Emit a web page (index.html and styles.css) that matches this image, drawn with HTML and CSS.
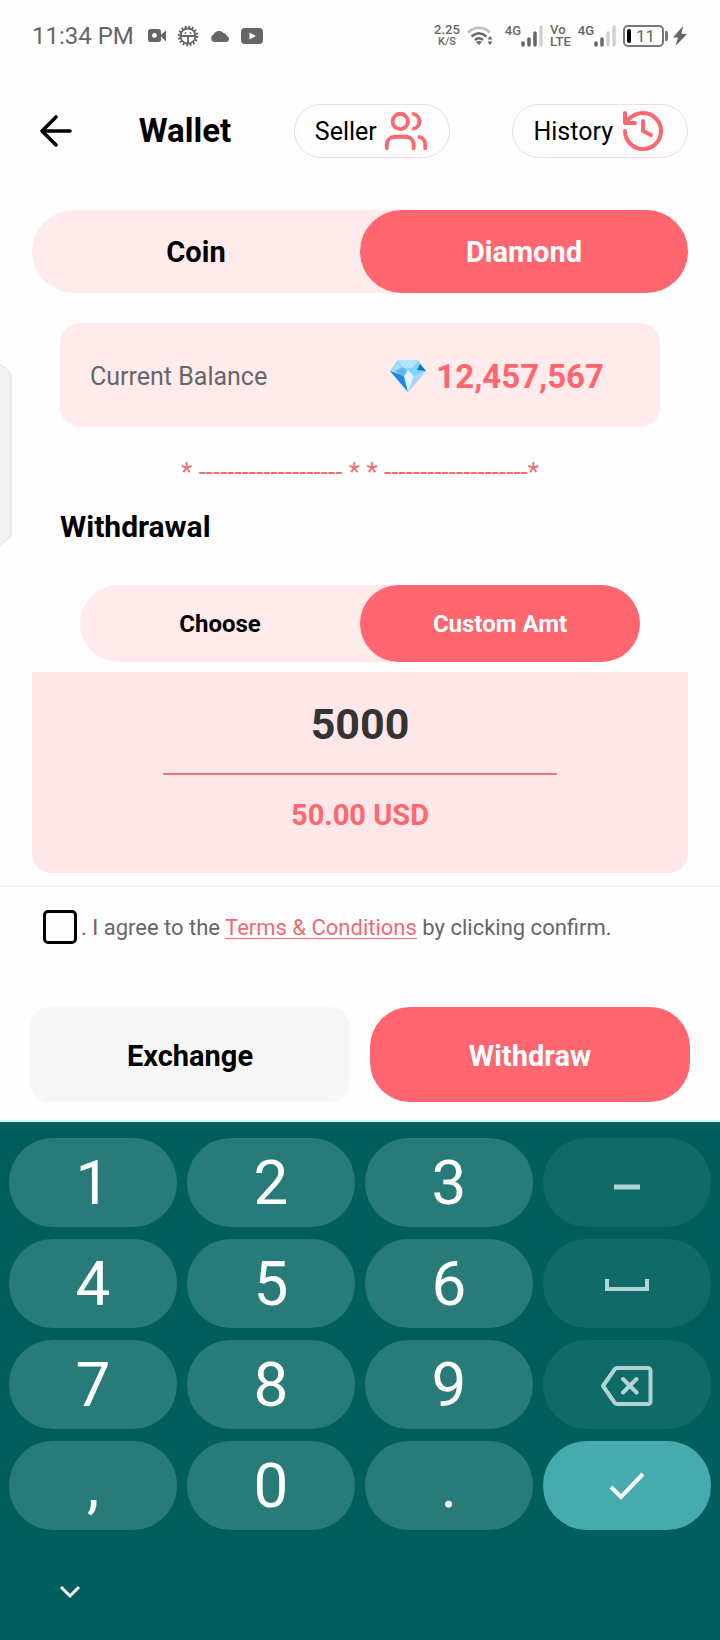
FILE: index.html
```html
<!DOCTYPE html>
<html lang="en">
<head>
<meta charset="utf-8">
<meta name="viewport" content="width=device-width, initial-scale=1">
<title>Wallet</title>
<link rel="stylesheet" href="styles.css">
</head>
<body>
<div class="status">
  <div class="status-left">
    <span class="clock">11:34 PM</span>
    <svg class="i-video" width="18" height="14" viewBox="0 0 18 14"><rect x="0" y="0" width="13" height="13" rx="2.5" fill="#666"/><path d="M12 6.5 18 1.5V12.500Z" fill="#666"/><circle cx="6.500" cy="6.500" r="2.400" fill="#fefefe"/></svg>
    <svg class="i-gear" width="22" height="22" viewBox="0 0 22 22"><circle cx="11" cy="11" r="9.200" fill="none" stroke="#666" stroke-width="2.200" stroke-dasharray="1.900 1.710"/><circle cx="11" cy="11" r="7.500" fill="none" stroke="#666" stroke-width="1.800"/><path d="M4 11h14M11 11v7" stroke="#666" stroke-width="1.800"/><circle cx="8.500" cy="8" r="0.900" fill="#666"/><circle cx="13.500" cy="8" r="0.900" fill="#666"/></svg>
    <svg class="i-cloud" width="20" height="12" viewBox="0 0 20 12"><path d="M4 12A4 4 0 0 1 3.500 4.500 6 6 0 0 1 13.500 3 4.500 4.500 0 0 1 17 6 3.200 3.200 0 0 1 17 12Z" fill="#666"/></svg>
    <svg width="22" height="16" viewBox="0 0 22 16"><rect width="22" height="16" rx="4" fill="#666"/><path d="M8.500 4.500 15 8l-6.500 3.500Z" fill="#fefefe"/></svg>
  </div>
  <div class="status-right">
    <span class="stack stack-speed"><span>2.25</span><small>K/S</small></span>
    <svg class="i-wifi" width="26" height="20" viewBox="0 0 26 20"><g fill="none" stroke-width="2.400"><path d="M1 6.500Q12 -3 23 6.500" stroke="#bbb"/><path d="M4.500 10.500Q12 4 19.500 10.500M8 14Q12 10.500 16 14" stroke="#666"/></g><path d="m12 19-3-3q3-2 6 0Z" fill="#666"/><path d="m23 10 2.500 3.500h-5ZM23 19l2.500-3.500h-5Z" fill="#666"/></svg>
    <span class="sig">4G<svg width="22" height="22" viewBox="0 0 22 22"><g stroke-width="3.500" stroke-linecap="round" stroke="#666"><path d="M2 18v2M8 14v6M14 8v12"/><path d="M20 2v18" stroke="#d0d0d0"/></g></svg></span>
    <span class="stack"><span>Vo</span><span>LTE</span></span>
    <span class="sig">4G<svg width="22" height="22" viewBox="0 0 22 22"><g stroke-width="3.500" stroke-linecap="round" stroke="#666"><path d="M2 18v2M8 14v6"/><path d="M14 8v12M20 2v18" stroke="#d0d0d0"/></g></svg></span>
    <span class="battery">11</span>
    <svg width="16" height="20" viewBox="0 0 16 20"><path d="M11 0 1 11.500h5L3.500 20 15 8H9.500Z" fill="#666"/></svg>
  </div>
</div>

<header class="header">
  <button class="back" aria-label="Back"><svg width="40" height="40" viewBox="0 0 40 40"><path d="M20 6 6 20l14 14M6 20h28" fill="none" stroke="#000" stroke-width="3.600" stroke-linecap="round" stroke-linejoin="round"/></svg></button>
  <h1>Wallet</h1>
  <button class="pill">Seller<svg width="46" height="46" viewBox="0 0 24 24"><path d="M16 21v-2a4 4 0 0 0-4-4H6a4 4 0 0 0-4 4v2M16 3.130a4 4 0 0 1 0 7.750M22 21v-2a4 4 0 0 0-3-3.870"/><circle cx="9" cy="7" r="4"/></svg></button>
  <button class="pill">History<svg width="48" height="48" viewBox="0 0 24 24"><path d="M3 12a9 9 0 1 0 9-9 9.750 9.750 0 0 0-6.740 2.740L3 8M3 3v5h5M12 7v5l4 2"/></svg></button>
</header>

<main>
  <div class="tabs">
    <button class="tab">Coin</button><button class="tab on">Diamond</button>
  </div>
  <section class="balance">
    <span>Current Balance</span>
    <strong><svg width="36" height="34" viewBox="0 0 36 34"><path d="M8 1h20l8 11-18 21L0 12Z" fill="#81d4fa"/><path d="M8 1h20l-5 8H12Z" fill="#b3e5fc"/><path d="M0 12 8 4l4 6v6Z" fill="#a9dcf9"/><path d="m0 12 14 5 4 16Z" fill="#1e88e5"/><path d="m5 12 8-4 5 6-4 4Z" fill="#64b5f6"/><path d="m14 17 4-6 6 6-6 16Z" fill="#e1f5fe"/><path d="m18 10 8-3 3 5-5 5Z" fill="#81d4fa"/><path d="m30 5 6 7-9-1Z" fill="#0277bd"/><path d="m24 17 12-5-18 21Z" fill="#a8d8f8"/></svg>12,457,567</strong>
  </section>
  <p class="rule">* -------------------- * * --------------------*</p>
  <h2>Withdrawal</h2>
  <div class="tabs tabs-small">
    <button class="tab">Choose</button><button class="tab on">Custom Amt</button>
  </div>
  <section class="amount">
    <input type="text" inputmode="numeric" value="5000" aria-label="Withdrawal amount">
    <output>50.00 USD</output>
  </section>
</main>

<footer class="footer">
  <div class="agree">
    <input type="checkbox" id="agree">
    <label for="agree">. I agree to the <a href="#terms">Terms &amp; Conditions</a> by clicking confirm.</label>
  </div>
  <div class="actions">
    <button class="exchange">Exchange</button>
    <button class="withdraw">Withdraw</button>
  </div>
</footer>

<div class="keyboard">
  <div class="keys">
    <button>1</button><button>2</button><button>3</button>
    <button class="soft" aria-label="Minus"><svg width="28" height="40" viewBox="0 0 28 40"><path d="M1 24h26" stroke-width="5"/></svg></button>
    <button>4</button><button>5</button><button>6</button>
    <button class="soft" aria-label="Space"><svg width="46" height="40" viewBox="0 0 46 40"><path d="M3 15v10h40V15" stroke-width="4"/></svg></button>
    <button>7</button><button>8</button><button>9</button>
    <button class="soft" aria-label="Delete"><svg width="52" height="42" viewBox="0 0 52 42"><path d="M16 4h31a2.500 2.500 0 0 1 2.500 2.500v31a2.500 2.500 0 0 1-2.500 2.500H16a3 3 0 0 1-2.500-1.500L2 22 13.500 5.500A3 3 0 0 1 16 4ZM22 15l13.500 13.500M35.500 15 22 28.500" stroke-width="4" stroke-linejoin="round" stroke-linecap="round"/></svg></button>
    <button>,</button><button>0</button><button>.</button>
    <button class="enter" aria-label="Done"><svg width="36" height="30" viewBox="0 0 36 30"><path d="m2 16 10 10L34 3" stroke-width="4"/></svg></button>
  </div>
  <button class="hide" aria-label="Hide keyboard"><svg width="20" height="14" viewBox="0 0 20 14"><path d="m1 2 9 9 9-9" fill="none" stroke="#fff" stroke-width="3"/></svg></button>
</div>

<svg class="handle" width="12" height="184" viewBox="0 0 12 184"><path d="M-1 1 7 6q4 3 4 7v158q0 4-4 6l-8 6Z" fill="#f2f2f2" stroke="#e2e2e2"/></svg>
</body>
</html>
```
FILE: styles.css
```css
* { box-sizing: border-box; }
body { margin: 0; position: relative; background: #fefefe; color: #000; font-family: Roboto, "Liberation Sans", sans-serif; }
button { font: inherit; color: inherit; border: 0; background: none; padding: 0; cursor: pointer; }
svg { display: block; flex: none; }
h1, h2, p { margin: 0; }

.status { display: flex; justify-content: space-between; height: 72px; padding: 0 32px; color: #666; align-items: center; }
.status-left { display: flex; align-items: center; gap: 11px; }
.clock { font-size: 24px; margin-right: 3px; }
.status-right { display: flex; align-items: center; gap: 7px; font-size: 13px; font-weight: 500; }
.stack { display: flex; flex-direction: column; line-height: 12px; }
.stack span, .stack small { display: block; height: 12px; }
.stack-speed { align-items: center; }
.stack small { font-size: 11px; }
.i-wifi { margin-right: 5px; }
.sig { display: flex; line-height: 12px; }
.battery { position: relative; width: 41px; height: 22px; margin-right: 1px; padding-left: 11px; border: 2px solid #777; border-radius: 5px; font-size: 17px; font-weight: 400; line-height: 18px; }
.battery::before { content: ""; position: absolute; left: 2px; top: 2px; width: 4px; height: 14px; border-radius: 2px; background: #000; }
.battery::after { content: ""; position: absolute; right: -6px; top: 4px; width: 3px; height: 10px; border-radius: 0 2px 2px 0; background: #777; }

.header { display: flex; justify-content: space-between; align-items: center; padding: 32px 32px 0 36px; }
.header h1 { font-size: 33px; line-height: 40px; font-weight: 700; }
.pill { display: flex; align-items: center; gap: 6px; height: 54px; padding: 0 20px; border: 1px solid #f5d7ea; border-radius: 27px; font-size: 25px; }
.pill svg { fill: none; stroke: #ff6670; stroke-width: 2; stroke-linecap: round; stroke-linejoin: round; }

main { padding: 52px 32px 12px; }
.tabs { display: flex; height: 83px; border-radius: 42px; background: #ffebeb; font-size: 29px; font-weight: 700; }
.tab { flex: 1; border-radius: 42px; }
.tab.on { background: #ff6670; color: #fff; }
.balance { display: flex; justify-content: space-between; align-items: center; height: 104px; margin: 30px 28px 0; padding: 2px 56px 0 30px; border-radius: 20px; background: #ffebeb; color: #666; font-size: 25px; }
.balance strong { display: flex; align-items: center; gap: 10px; color: #ff6670; font-size: 33px; font-weight: 700; }
.rule { margin-top: 31px; line-height: 28px; font-size: 26px; color: #f06a74; text-align: center; }
h2 { margin: 23px 28px 40px; font-size: 30px; line-height: 36px; }
.tabs-small { height: 77px; margin: 0 48px; font-size: 24px; }
.amount { display: flex; flex-direction: column; align-items: center; height: 201px; margin-top: 10px; border-radius: 0 0 20px 20px; background: #ffe7e9; }
.amount input { width: 60%; height: 103px; padding: 3px 0 0; border: 0; border-bottom: 2px solid #ee747c; border-radius: 0; background: none; color: #333; text-align: center; font: 700 43px/48px Roboto, sans-serif; }
.amount output { margin-top: 22px; color: #ff6670; font-size: 29px; line-height: 36px; font-weight: 700; }

.footer { border-top: 2px solid #f3f3f5; padding: 21px 30px 18px; }
.agree { display: flex; align-items: center; gap: 4px; padding-left: 13px; height: 38px; color: #666; font-size: 22px; }
.agree input { appearance: none; width: 34px; height: 34px; margin: 0; border: 3px solid #000; border-radius: 5px; }
.agree input:checked { background: #ff6670; }
.agree a { color: #f06a74; text-underline-offset: 3px; text-decoration-thickness: 1px; }
.actions { display: flex; gap: 20px; margin-top: 61px; font-size: 29px; font-weight: 700; }
.actions button { flex: 1; height: 95px; padding-top: 2px; }
.exchange { border-radius: 20px; background: #f7f7f7; }
.withdraw { border-radius: 40px; background: #ff6670; color: #fff; }

.keyboard { border-top: 2px solid #d5f8f8; background: #005f5c; padding: 16px 9px 36px; }
.keys { display: grid; grid-template-columns: repeat(4, 1fr); gap: 12px 10px; }
.keys button { display: flex; align-items: center; justify-content: center; height: 89px; border-radius: 44px; background: #287b79; color: #fff; font-size: 62px; line-height: 72px; }
.keys svg { fill: none; stroke: #b0d4d5; }
.keys .soft { background: #0f6a68; }
.keys .enter { background: #45abac; }
.keys .enter svg { stroke: #fff; }
.hide { display: flex; align-items: center; justify-content: center; width: 60px; height: 48px; margin: 38px 0 0 31px; }
.handle { position: absolute; left: 0; top: 363px; }
```
